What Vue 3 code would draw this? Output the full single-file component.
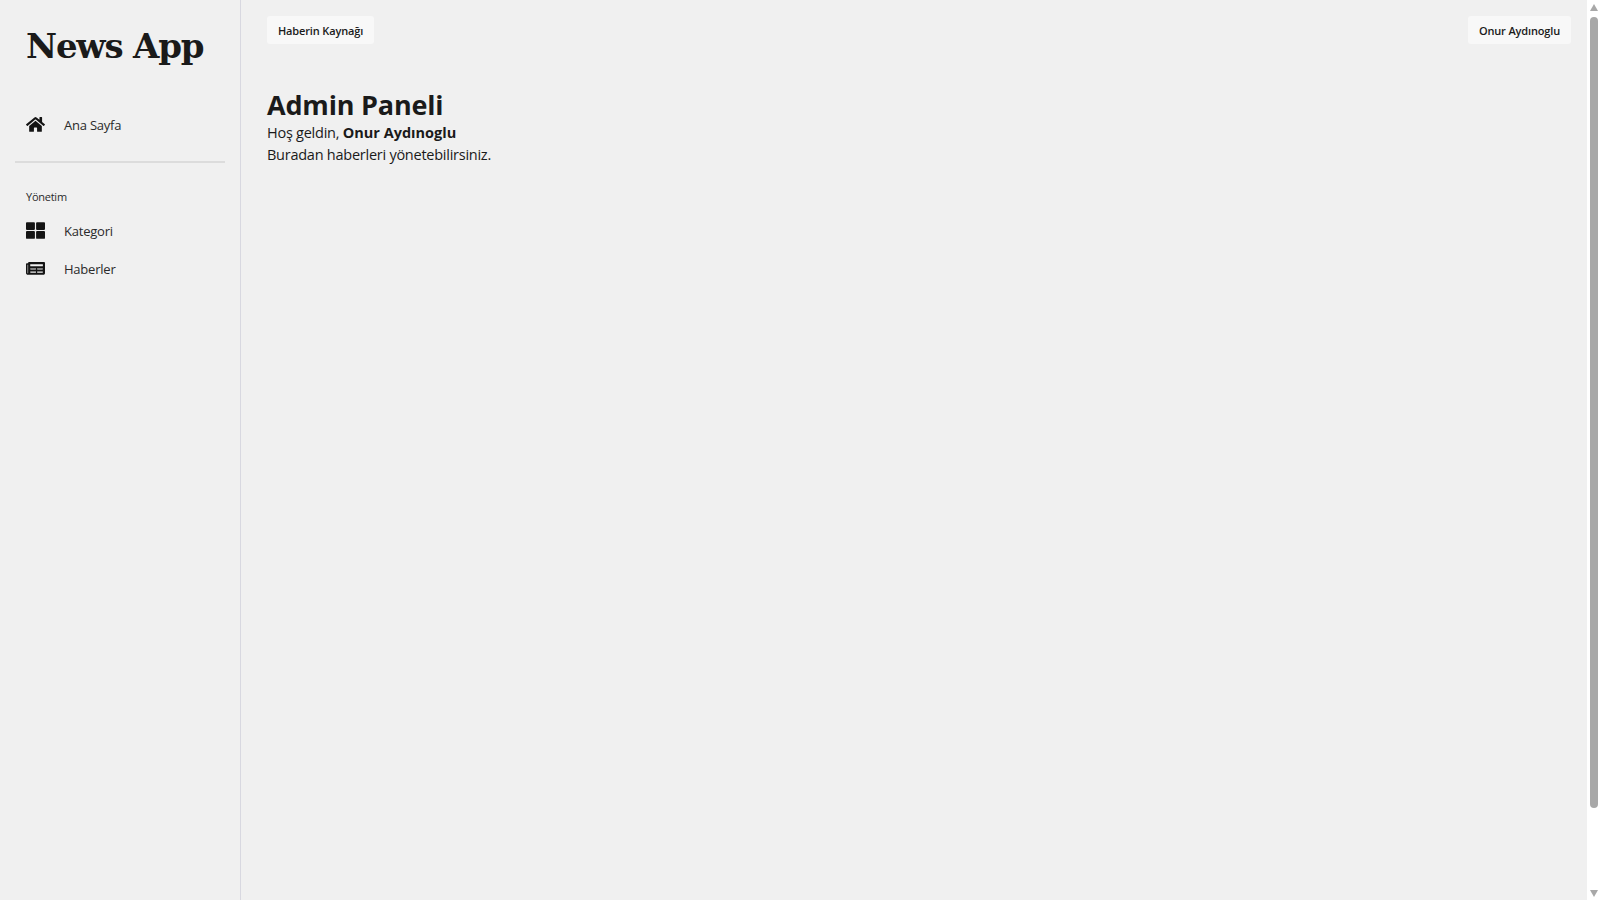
<script setup>
const navMain = [
  {
    label: 'Ana Sayfa',
    viewBox: '0 0 576 512',
    d: 'M280.37 148.26L96 300.11V464a16 16 0 0 0 16 16l112.06-.29a16 16 0 0 0 15.92-16V368a16 16 0 0 1 16-16h64a16 16 0 0 1 16 16v95.64a16 16 0 0 0 16 16.05L464 480a16 16 0 0 0 16-16V300L295.67 148.26a12.19 12.19 0 0 0-15.3 0zM571.6 251.47L488 182.56V44.05a12 12 0 0 0-12-12h-56a12 12 0 0 0-12 12v72.61L318.47 43a48 48 0 0 0-61 0L4.34 251.47a12 12 0 0 0-1.6 16.9l25.5 31A12 12 0 0 0 45.15 301l235.22-193.74a12.19 12.19 0 0 1 15.3 0L530.9 301a12 12 0 0 0 16.9-1.6l25.5-31a12 12 0 0 0-1.7-16.93z'
  }
]

const navAdmin = [
  {
    label: 'Kategori',
    viewBox: '0 0 512 512',
    d: 'M296 32h192c13.255 0 24 10.745 24 24v160c0 13.255-10.745 24-24 24H296c-13.255 0-24-10.745-24-24V56c0-13.255 10.745-24 24-24zm-80 0H24C10.745 32 0 42.745 0 56v160c0 13.255 10.745 24 24 24h192c13.255 0 24-10.745 24-24V56c0-13.255-10.745-24-24-24zM0 296v160c0 13.255 10.745 24 24 24h192c13.255 0 24-10.745 24-24V296c0-13.255-10.745-24-24-24H24c-13.255 0-24 10.745-24 24zm296 184h192c13.255 0 24-10.745 24-24V296c0-13.255-10.745-24-24-24H296c-13.255 0-24 10.745-24 24v160c0 13.255 10.745 24 24 24z'
  },
  {
    label: 'Haberler',
    viewBox: '0 0 576 512',
    d: 'M552 64H88c-13.255 0-24 10.745-24 24v8H24c-13.255 0-24 10.745-24 24v272c0 30.928 25.072 56 56 56h472c26.51 0 48-21.49 48-48V88c0-13.255-10.745-24-24-24zM56 400a8 8 0 0 1-8-8V144h16v248a8 8 0 0 1-8 8zm236-16H140c-6.627 0-12-5.373-12-12v-8c0-6.627 5.373-12 12-12h152c6.627 0 12 5.373 12 12v8c0 6.627-5.373 12-12 12zm208 0H348c-6.627 0-12-5.373-12-12v-8c0-6.627 5.373-12 12-12h152c6.627 0 12 5.373 12 12v8c0 6.627-5.373 12-12 12zm-208-96H140c-6.627 0-12-5.373-12-12v-8c0-6.627 5.373-12 12-12h152c6.627 0 12 5.373 12 12v8c0 6.627-5.373 12-12 12zm208 0H348c-6.627 0-12-5.373-12-12v-8c0-6.627 5.373-12 12-12h152c6.627 0 12 5.373 12 12v8c0 6.627-5.373 12-12 12zm0-96H140c-6.627 0-12-5.373-12-12v-40c0-6.627 5.373-12 12-12h360c6.627 0 12 5.373 12 12v40c0 6.627-5.373 12-12 12z'
  }
]
</script>

<template>
  <div class="page">
    <aside class="sidebar">
      <div class="logo">News App</div>

      <nav class="nav nav-main">
        <a v-for="item in navMain" :key="item.label" class="nav-item">
          <svg class="nav-icon" :viewBox="item.viewBox" width="19"><path :d="item.d" /></svg>
          <span>{{ item.label }}</span>
        </a>
      </nav>

      <hr class="divider" />

      <div class="nav-heading">Yönetim</div>
      <nav class="nav">
        <a v-for="item in navAdmin" :key="item.label" class="nav-item">
          <svg class="nav-icon" :viewBox="item.viewBox" width="19"><path :d="item.d" /></svg>
          <span>{{ item.label }}</span>
        </a>
      </nav>
    </aside>

    <main class="content">
      <header class="topbar">
        <button class="top-btn">Haberin Kaynağı</button>
        <button class="top-btn">Onur Aydınoglu</button>
      </header>

      <h1 class="title">Admin Paneli</h1>
      <p class="line">Hoş geldin, <strong>Onur Aydınoglu</strong></p>
      <p class="line">Buradan haberleri yönetebilirsiniz.</p>
    </main>

    <div class="scrollbar">
      <span class="arrow arrow-up"></span>
      <span class="thumb"></span>
      <span class="arrow arrow-down"></span>
    </div>
  </div>
</template>

<style scoped>
.page {
  display: flex;
  height: 900px;
  background: #f0f0f0;
  color: #1a1a1a;
  font-family: "Open Sans", "Noto Sans", sans-serif;
}

/* sidebar */
.sidebar {
  width: 241px;
  flex: none;
  box-sizing: border-box;
  border-right: 1px solid #d8d8e0;
  padding: 0 15px;
}

.logo {
  height: 92px;
  padding: 18px 0 0 11px;
  box-sizing: border-box;
  font-family: "DejaVu Serif", serif;
  font-size: 34px;
  line-height: 56px;
  font-weight: 700;
  white-space: nowrap;
  letter-spacing: -1.2px;
}

.nav {
  display: flex;
  flex-direction: column;
}

.nav-main {
  padding-top: 14px;
}

.nav-item {
  display: flex;
  align-items: center;
  gap: 19px;
  height: 38px;
  padding-left: 11px;
  font-size: 13px;
  letter-spacing: -0.22px;
  color: #2a2a2a;
}

.nav-icon {
  flex: none;
  margin-top: -2px;
  fill: #141414;
}

.divider {
  margin: 17px 0 0;
  border: 0;
  border-top: 2px solid #dcdcdc;
}

.nav-heading {
  margin-top: 24px;
  margin-bottom: 5px;
  padding-left: 11px;
  font-size: 11px;
  letter-spacing: -0.25px;
  line-height: 20px;
  color: #2a2a2a;
}

/* content */
.content {
  flex: 1;
  padding: 16px 16px 0 26px;
}

.topbar {
  display: flex;
  justify-content: space-between;
  margin-bottom: 43px;
}

.top-btn {
  height: 28px;
  padding: 0 11px;
  border: 0;
  border-radius: 3px;
  background: #f8f8f8;
  color: #1a1a1a;
  font-family: inherit;
  font-size: 11px;
  letter-spacing: -0.15px;
  font-weight: 600;
}

.title {
  margin: 0;
  font-size: 27px;
  letter-spacing: -0.2px;
  line-height: 35px;
  font-weight: 700;
}

.line {
  margin: 0;
  font-size: 14.5px;
  letter-spacing: -0.25px;
  line-height: 22px;
}

.line strong {
  letter-spacing: 0;
}

/* scrollbar */
.scrollbar {
  position: relative;
  width: 13px;
  flex: none;
  background: #fff;
}

.thumb {
  position: absolute;
  top: 17px;
  left: 3px;
  width: 8px;
  height: 791px;
  border-radius: 4px;
  background: #a8a8a8;
}

.arrow {
  position: absolute;
  left: 3px;
  width: 0;
  height: 0;
  border-left: 4px solid transparent;
  border-right: 4px solid transparent;
}

.arrow-up {
  top: 4px;
  border-bottom: 7px solid #a8a8a8;
}

.arrow-down {
  bottom: 3px;
  border-top: 7px solid #a8a8a8;
}
</style>

<style>
html, body {
  margin: 0;
  overflow: hidden;
}
</style>
